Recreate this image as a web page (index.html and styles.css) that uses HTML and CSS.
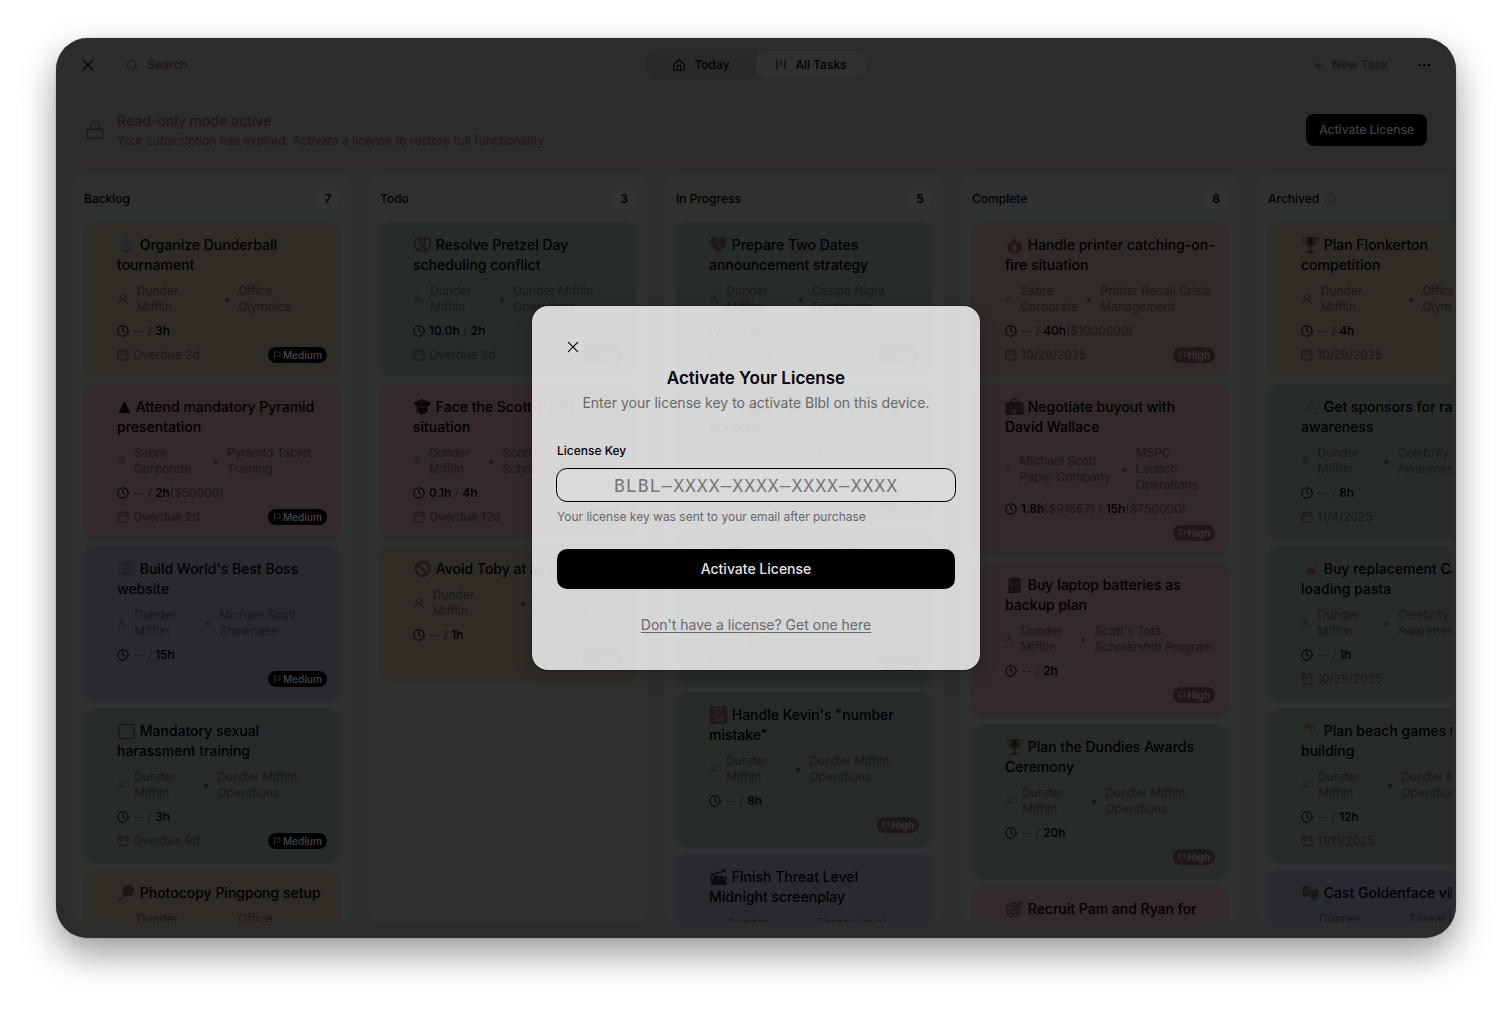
FILE: index.html
```html
<!DOCTYPE html>
<html lang="en">
<head>
  <meta charset="UTF-8" />
  <meta name="viewport" content="width=device-width, initial-scale=1.0" />
  <title>Blbl – All Tasks</title>
  <link rel="stylesheet" href="styles.css">
</head>
<body>
  <!-- Icon sprite -->
  <svg class="sprite" aria-hidden="true">
    <symbol id="i-x" viewBox="0 0 24 24"><path d="M4 4l16 16M20 4L4 20"/></symbol>
    <symbol id="i-search" viewBox="0 0 24 24"><circle cx="11" cy="11" r="9"/><path d="M18 18l4 4"/></symbol>
    <symbol id="i-home" viewBox="0 0 24 24"><path d="M3 10.5L12 3l9 7.500V19a2 2 0 0 1-2 2H5a2 2 0 0 1-2-2z"/><path d="M9 21v-7a2 2 0 0 1 2-2h2a2 2 0 0 1 2 2v7"/></symbol>
    <symbol id="i-board" viewBox="0 0 24 24"><path d="M4 4v16M12 4v7M20 4v16"/></symbol>
    <symbol id="i-plus" viewBox="0 0 24 24"><path d="M4 12h16M12 4v16"/></symbol>
    <symbol id="i-dots" viewBox="0 0 24 24"><circle cx="3" cy="12" r="1.500"/><circle cx="12" cy="12" r="1.500"/><circle cx="21" cy="12" r="1.500"/></symbol>
    <symbol id="i-lock" viewBox="0 0 24 24"><rect x="2.500" y="11" width="19" height="11" rx="2"/><path d="M7 11V7a5 5 0 0 1 10 0v4"/></symbol>
    <symbol id="i-info" viewBox="0 0 24 24"><circle cx="12" cy="12" r="10"/><path d="M12 11v6M12 7v1"/></symbol>
    <symbol id="i-user" viewBox="0 0 24 24"><circle cx="12" cy="8" r="5"/><path d="M4 22v-2a5 5 0 0 1 5-5h6a5 5 0 0 1 5 5v2"/></symbol>
    <symbol id="i-clock" viewBox="0 0 24 24"><circle cx="12" cy="12" r="10.500"/><path d="M12 6v6l4 3"/></symbol>
    <symbol id="i-date" viewBox="0 0 24 24"><rect x="2" y="4" width="20" height="18" rx="2"/><path d="M2 10h20M7 1v5M17 1v5"/></symbol>
    <symbol id="i-flag" viewBox="0 0 24 24"><path d="M4 23V3M4 3c6-3 9 3 17 0v12c-8 3-11-3-17 0"/></symbol>

    <!-- Task pictures -->
    <symbol id="e-ball" viewBox="0 0 18 18"><circle cx="9" cy="9" r="8" fill="#2a2d2e"/><path d="M3 6c4-3 8-3 12 0M9 2c-2 5 0 9 5 11M3 10c4 0 7 2 8 5" fill="none" stroke="#202224"/><path d="M2 12a8 8 0 0 0 14 0c-4 3-10 3-14 0z" fill="#201c1b"/></symbol>
    <symbol id="e-pyramid" viewBox="0 0 14 18"><path d="M7 3l6 12H1z" fill="#000"/></symbol>
    <symbol id="e-globe" viewBox="0 0 18 18"><g fill="none" stroke="#1f1f22"><circle cx="9" cy="9" r="7.500"/><ellipse cx="9" cy="9" rx="3.500" ry="7.500"/><path d="M9 1.500v15M1.500 9h15M3 5h12M3 13h12"/></g></symbol>
    <symbol id="e-frame" viewBox="0 0 18 18"><rect x="1.500" y="2.500" width="15" height="14" fill="#272b2a" stroke="#181413"/></symbol>
    <symbol id="e-paddle" viewBox="0 0 18 18"><path d="M5 10C4 4 8 1 12 1s6 4 4 8c-2 3-5 4-8 3l-6 5-1-1 5-4z" fill="#1e1718"/><circle cx="14" cy="14" r="2" fill="#302c2b"/></symbol>
    <symbol id="e-pretzel" viewBox="0 0 18 18"><path d="M4 15L11 8c2-3 0-6-2-4-2-2-4 1-2 4l7 7M9 4C6 0 1 2 1 7s3 8 8 8 8-3 8-8-5-7-8-3" fill="none" stroke="#231818" stroke-width="2"/></symbol>
    <symbol id="e-grad" viewBox="0 0 18 18"><path d="M8 1l10 4-4 4v5l-6 3-4-4V9L0 5z" fill="#090909"/><path d="M3 7v9M6 8l4 2 3-2" fill="none" stroke="#1c1819"/></symbol>
    <symbol id="e-no" viewBox="0 0 18 18"><g fill="none" stroke="#1f1a18" stroke-width="2.500"><circle cx="9" cy="9" r="7"/><path d="M4 4l10 10"/></g></symbol>
    <symbol id="e-heart" viewBox="0 0 18 18"><path d="M9 16C4 13 0 8 1 4c1-3 6-4 8 0 2-4 7-3 8 0 1 4-3 9-8 12z" fill="#211718"/><path d="M9 4l-2 3 4 2-3 3 1 3" fill="none" stroke="#2b2b2b"/></symbol>
    <symbol id="e-numbers" viewBox="0 0 18 18"><rect x="0" y="0" width="18" height="18" rx="3" fill="#211819"/><text x="4" y="8" class="digits">12</text><text x="4" y="16" class="digits">34</text></symbol>
    <symbol id="e-clapper" viewBox="0 0 18 18"><path d="M1 8h16v9H2zM1 6l15-5 1 2L2 8z" fill="#0b0b0b"/><path d="M4 5l3 1M9 3l3 1M4 8l-1 3M10 8l-1 3M15 8l-1 3" stroke="#2b2b2d"/></symbol>
    <symbol id="e-fire" viewBox="0 0 18 18"><path d="M8 1c5 4 2 6 4 7l2-3c4 6 2 12-5 12S0 10 4 6c1 3 2 3 2 1 0-3 3-3 2-6z" fill="#201917"/><path d="M9 16c-4-1-4-4 0-8 4 4 3 7 0 8z" fill="#302b23"/></symbol>
    <symbol id="e-case" viewBox="0 0 18 18"><path d="M5 5c0-5 8-5 8 0" fill="none" stroke="#171212" stroke-width="1.500"/><rect x="0" y="4" width="18" height="13" rx="1" fill="#171212"/><path d="M3 6l5 6M15 6l-5 6" stroke="#231b1b"/><rect x="8" y="12" width="2" height="3" fill="#30292a"/></symbol>
    <symbol id="e-battery" viewBox="0 0 18 18"><rect x="3" y="2" width="12" height="15" rx="1" fill="#141111"/><path d="M6 1h6M7 9h4M6 5v8M12 5v8" stroke="#211b1b" stroke-width="1.500"/></symbol>
    <symbol id="e-trophy" viewBox="0 0 18 18"><path d="M4 1h10v5c0 3-3 5-4 5v3l4 3H4l4-3v-3C7 11 4 9 4 6z" fill="#1e1713"/><path d="M4 2H1c0 4 1 6 5 7M14 2h3c0 4-1 6-5 7" fill="none" stroke="#1e1713"/><path d="M9 2v6" stroke="#080808" stroke-width="2"/></symbol>
    <symbol id="e-target" viewBox="0 0 18 18"><g fill="none" stroke="#1d1818" stroke-width="1.500"><circle cx="8" cy="10" r="7"/><circle cx="8" cy="10" r="4"/><circle cx="8" cy="10" r="1"/><path d="M8 10l8-8M14 1v3h3"/></g></symbol>
    <symbol id="e-run" viewBox="0 0 18 18"><circle cx="9" cy="2" r="1" fill="#2d211d"/><path d="M10 5L7 9l3 2M7 10l-5 4M10 6l3 2" fill="none" stroke="#1c1a19"/><circle cx="15" cy="15" r="1" fill="#111"/></symbol>
    <symbol id="e-pasta" viewBox="0 0 18 18"><ellipse cx="9" cy="12" rx="8" ry="3" fill="#252a29"/><path d="M4 12c1-5 9-5 10 0-2 2-8 2-10 0z" fill="#231817"/><path d="M12 3l4-1" stroke="#1d1918"/></symbol>
    <symbol id="e-beach" viewBox="0 0 18 18"><path d="M2 7c2-6 10-6 13 1-5-2-9-2-13-1z" fill="#2b1f1c"/><path d="M9 5l2 9" stroke="#1c1a19"/><path d="M1 13c5-2 11-1 16 1" fill="none" stroke="#302a25" stroke-width="2"/></symbol>
    <symbol id="e-masks" viewBox="0 0 18 18"><path d="M1 2l8 1v8l-5 2-3-3zM9 7l8-2v8l-4 4-4-3z" fill="#1b1718"/><path d="M3 5h2M6 6h2M11 10l2-1M15 8v2M3 9l3-1M12 13l3 1" stroke="#302b2a"/></symbol>
  </svg>

  <div class="window">
    <header class="topbar">
      <div class="topbar-side">
        <button class="icon-btn" aria-label="Close"><svg class="icon s14"><use href="#i-x"/></svg></button>
        <label class="search">
          <svg class="icon s12"><use href="#i-search"/></svg>
          <input type="text" placeholder="Search" aria-label="Search">
        </label>
      </div>
      <nav class="tabs">
        <button class="tab"><svg class="icon s14"><use href="#i-home"/></svg>Today</button>
        <button class="tab active"><svg class="icon s12"><use href="#i-board"/></svg>All Tasks</button>
      </nav>
      <div class="topbar-side right">
        <button class="new-task"><svg class="icon s12"><use href="#i-plus"/></svg>New Task</button>
        <button class="icon-btn" aria-label="More"><svg class="icon s12 solid"><use href="#i-dots"/></svg></button>
      </div>
    </header>

    <section class="banner">
      <svg class="icon s20"><use href="#i-lock"/></svg>
      <div class="banner-text">
        <strong>Read-only mode active</strong>
        <span>Your subscription has expired. Activate a license to restore full functionality.</span>
      </div>
      <button class="banner-btn">Activate License</button>
    </section>

    <main class="board">
      <section class="column">
        <header class="column-head"><h2>Backlog</h2><span class="count">7</span></header>
        <article class="card yellow">
          <h3><svg class="emoji"><use href="#e-ball"/></svg> Organize Dunderball tournament</h3>
          <div class="meta"><svg class="icon s12"><use href="#i-user"/></svg><span>Dunder Mifflin</span><i>•</i><span>Office Olympics</span></div>
          <div class="time"><svg class="icon s12"><use href="#i-clock"/></svg><span>-- / <b>3h</b></span></div>
          <div class="foot"><svg class="icon s12"><use href="#i-date"/></svg><span>Overdue 2d</span><span class="badge"><svg class="icon s8"><use href="#i-flag"/></svg>Medium</span></div>
        </article>
        <article class="card pink">
          <h3><svg class="emoji narrow"><use href="#e-pyramid"/></svg> Attend mandatory Pyramid presentation</h3>
          <div class="meta"><svg class="icon s12"><use href="#i-user"/></svg><span>Sabre Corporate</span><i>•</i><span>Pyramid Tablet Training</span></div>
          <div class="time"><svg class="icon s12"><use href="#i-clock"/></svg><span>-- / <b>2h</b>($50000)</span></div>
          <div class="foot"><svg class="icon s12"><use href="#i-date"/></svg><span>Overdue 2d</span><span class="badge"><svg class="icon s8"><use href="#i-flag"/></svg>Medium</span></div>
        </article>
        <article class="card purple">
          <h3><svg class="emoji"><use href="#e-globe"/></svg> Build World's Best Boss website</h3>
          <div class="meta"><svg class="icon s12"><use href="#i-user"/></svg><span>Dunder Mifflin</span><i>•</i><span>Michael Scott Showcase</span></div>
          <div class="time"><svg class="icon s12"><use href="#i-clock"/></svg><span>-- / <b>15h</b></span></div>
          <div class="foot"><span class="badge"><svg class="icon s8"><use href="#i-flag"/></svg>Medium</span></div>
        </article>
        <article class="card green">
          <h3><svg class="emoji"><use href="#e-frame"/></svg> Mandatory sexual harassment training</h3>
          <div class="meta"><svg class="icon s12"><use href="#i-user"/></svg><span>Dunder Mifflin</span><i>•</i><span>Dunder Mifflin Operations</span></div>
          <div class="time"><svg class="icon s12"><use href="#i-clock"/></svg><span>-- / <b>3h</b></span></div>
          <div class="foot"><svg class="icon s12"><use href="#i-date"/></svg><span>Overdue 9d</span><span class="badge"><svg class="icon s8"><use href="#i-flag"/></svg>Medium</span></div>
        </article>
        <article class="card yellow">
          <h3><svg class="emoji"><use href="#e-paddle"/></svg> Photocopy Pingpong setup</h3>
          <div class="meta"><svg class="icon s12"><use href="#i-user"/></svg><span>Dunder Mifflin</span><i>•</i><span>Office Olympics</span></div>
        </article>
      </section>

      <section class="column">
        <header class="column-head"><h2>Todo</h2><span class="count">3</span></header>
        <article class="card green">
          <h3><svg class="emoji"><use href="#e-pretzel"/></svg> Resolve Pretzel Day scheduling conflict</h3>
          <div class="meta"><svg class="icon s12"><use href="#i-user"/></svg><span>Dunder Mifflin</span><i>•</i><span>Dunder Mifflin Operations</span></div>
          <div class="time"><svg class="icon s12"><use href="#i-clock"/></svg><span><b>10.0h</b> / <b>2h</b></span></div>
          <div class="foot"><svg class="icon s12"><use href="#i-date"/></svg><span>Overdue 2d</span><span class="badge high"><svg class="icon s8"><use href="#i-flag"/></svg>High</span></div>
        </article>
        <article class="card pink">
          <h3><svg class="emoji"><use href="#e-grad"/></svg> Face the Scott's Tots situation</h3>
          <div class="meta"><svg class="icon s12"><use href="#i-user"/></svg><span>Dunder Mifflin</span><i>•</i><span>Scott's Tots Scholarship Program</span></div>
          <div class="time"><svg class="icon s12"><use href="#i-clock"/></svg><span><b>0.1h</b> / <b>4h</b></span></div>
          <div class="foot"><svg class="icon s12"><use href="#i-date"/></svg><span>Overdue 12d</span><span class="badge high"><svg class="icon s8"><use href="#i-flag"/></svg>High</span></div>
        </article>
        <article class="card yellow">
          <h3><svg class="emoji"><use href="#e-no"/></svg> Avoid Toby at all costs</h3>
          <div class="meta"><svg class="icon s12"><use href="#i-user"/></svg><span>Dunder Mifflin</span><i>•</i><span>Office Olympics</span></div>
          <div class="time"><svg class="icon s12"><use href="#i-clock"/></svg><span>-- / <b>1h</b></span></div>
          <div class="foot"><span class="badge high"><svg class="icon s8"><use href="#i-flag"/></svg>High</span></div>
        </article>
      </section>

      <section class="column">
        <header class="column-head"><h2>In Progress</h2><span class="count">5</span></header>
        <article class="card green">
          <h3><svg class="emoji"><use href="#e-heart"/></svg> Prepare Two Dates announcement strategy</h3>
          <div class="meta"><svg class="icon s12"><use href="#i-user"/></svg><span>Dunder Mifflin</span><i>•</i><span>Casino Night Fundraiser</span></div>
          <div class="time"><svg class="icon s12"><use href="#i-clock"/></svg><span>-- / <b>1h</b></span></div>
          <div class="foot"><svg class="icon s12"><use href="#i-date"/></svg><span>Overdue 2d</span><span class="badge high"><svg class="icon s8"><use href="#i-flag"/></svg>High</span></div>
        </article>
        <article class="card green">
          <h3><svg class="emoji"><use href="#e-globe"/></svg> Prepare diversity training content</h3>
          <div class="meta"><svg class="icon s12"><use href="#i-user"/></svg><span>Dunder Mifflin</span><i>•</i><span>Diversity Day</span></div>
          <div class="time"><svg class="icon s12"><use href="#i-clock"/></svg><span>-- / <b>6h</b></span></div>
          <div class="foot"><span class="badge high"><svg class="icon s8"><use href="#i-flag"/></svg>High</span></div>
        </article>
        <article class="card green">
          <h3><svg class="emoji"><use href="#e-no"/></svg> Set up Casino Night fundraiser tables</h3>
          <div class="meta"><svg class="icon s12"><use href="#i-user"/></svg><span>Dunder Mifflin</span><i>•</i><span>Casino Night Fundraiser</span></div>
          <div class="time"><svg class="icon s12"><use href="#i-clock"/></svg><span>-- / <b>12h</b></span></div>
          <div class="foot"><svg class="icon s12"><use href="#i-date"/></svg><span class="badge high"><svg class="icon s8"><use href="#i-flag"/></svg>High</span></div>
        </article>
        <article class="card green">
          <h3><svg class="emoji"><use href="#e-numbers"/></svg> Handle Kevin's "number mistake"</h3>
          <div class="meta"><svg class="icon s12"><use href="#i-user"/></svg><span>Dunder Mifflin</span><i>•</i><span>Dunder Mifflin Operations</span></div>
          <div class="time"><svg class="icon s12"><use href="#i-clock"/></svg><span>-- / <b>8h</b></span></div>
          <div class="foot"><span class="badge high"><svg class="icon s8"><use href="#i-flag"/></svg>High</span></div>
        </article>
        <article class="card purple">
          <h3><svg class="emoji"><use href="#e-clapper"/></svg> Finish Threat Level Midnight screenplay</h3>
          <div class="meta"><svg class="icon s12"><use href="#i-user"/></svg><span>Dunder Mifflin</span><i>•</i><span>Threat Level Midnight</span></div>
        </article>
      </section>

      <section class="column">
        <header class="column-head"><h2>Complete</h2><span class="count">8</span></header>
        <article class="card orange">
          <h3><svg class="emoji"><use href="#e-fire"/></svg> Handle printer catching-on-fire situation</h3>
          <div class="meta"><svg class="icon s12"><use href="#i-user"/></svg><span>Sabre Corporate</span><i>•</i><span>Printer Recall Crisis Management</span></div>
          <div class="time"><svg class="icon s12"><use href="#i-clock"/></svg><span>-- / <b>40h</b>($1000000)</span></div>
          <div class="foot"><svg class="icon s12"><use href="#i-date"/></svg><span>10/28/2025</span><span class="badge high"><svg class="icon s8"><use href="#i-flag"/></svg>High</span></div>
        </article>
        <article class="card pink">
          <h3><svg class="emoji"><use href="#e-case"/></svg> Negotiate buyout with David Wallace</h3>
          <div class="meta"><svg class="icon s12"><use href="#i-user"/></svg><span>Michael Scott Paper Company</span><i>•</i><span>MSPC Launch Operations</span></div>
          <div class="time"><svg class="icon s12"><use href="#i-clock"/></svg><span><b>1.8h</b>($91667) / <b>15h</b>($750000)</span></div>
          <div class="foot"><span class="badge high"><svg class="icon s8"><use href="#i-flag"/></svg>High</span></div>
        </article>
        <article class="card pink">
          <h3><svg class="emoji"><use href="#e-battery"/></svg> Buy laptop batteries as backup plan</h3>
          <div class="meta"><svg class="icon s12"><use href="#i-user"/></svg><span>Dunder Mifflin</span><i>•</i><span>Scott's Tots Scholarship Program</span></div>
          <div class="time"><svg class="icon s12"><use href="#i-clock"/></svg><span>-- / <b>2h</b></span></div>
          <div class="foot"><span class="badge high"><svg class="icon s8"><use href="#i-flag"/></svg>High</span></div>
        </article>
        <article class="card green">
          <h3><svg class="emoji"><use href="#e-trophy"/></svg> Plan the Dundies Awards Ceremony</h3>
          <div class="meta"><svg class="icon s12"><use href="#i-user"/></svg><span>Dunder Mifflin</span><i>•</i><span>Dunder Mifflin Operations</span></div>
          <div class="time"><svg class="icon s12"><use href="#i-clock"/></svg><span>-- / <b>20h</b></span></div>
          <div class="foot"><span class="badge high"><svg class="icon s8"><use href="#i-flag"/></svg>High</span></div>
        </article>
        <article class="card pink">
          <h3><svg class="emoji"><use href="#e-target"/></svg> Recruit Pam and Ryan for MSPC</h3>
        </article>
      </section>

      <section class="column">
        <header class="column-head"><h2>Archived</h2><svg class="icon s12 info"><use href="#i-info"/></svg></header>
        <article class="card yellow">
          <h3><svg class="emoji"><use href="#e-trophy"/></svg> Plan Flonkerton<br>competition</h3>
          <div class="meta"><svg class="icon s12"><use href="#i-user"/></svg><span>Dunder Mifflin</span><i>•</i><span>Office Olympics</span></div>
          <div class="time"><svg class="icon s12"><use href="#i-clock"/></svg><span>-- / <b>4h</b></span></div>
          <div class="foot"><svg class="icon s12"><use href="#i-date"/></svg><span>10/29/2025</span></div>
        </article>
        <article class="card green">
          <h3><svg class="emoji"><use href="#e-run"/></svg> Get sponsors for rabies awareness</h3>
          <div class="meta"><svg class="icon s12"><use href="#i-user"/></svg><span>Dunder Mifflin</span><i>•</i><span>Celebrity Rabies Awareness</span></div>
          <div class="time"><svg class="icon s12"><use href="#i-clock"/></svg><span>-- / <b>8h</b></span></div>
          <div class="foot"><svg class="icon s12"><use href="#i-date"/></svg><span>11/4/2025</span></div>
        </article>
        <article class="card green">
          <h3><svg class="emoji"><use href="#e-pasta"/></svg> Buy replacement Carbo-loading pasta</h3>
          <div class="meta"><svg class="icon s12"><use href="#i-user"/></svg><span>Dunder Mifflin</span><i>•</i><span>Celebrity Rabies Awareness</span></div>
          <div class="time"><svg class="icon s12"><use href="#i-clock"/></svg><span>-- / <b>1h</b></span></div>
          <div class="foot"><svg class="icon s12"><use href="#i-date"/></svg><span>10/29/2025</span></div>
        </article>
        <article class="card green">
          <h3><svg class="emoji"><use href="#e-beach"/></svg> Plan beach games team building</h3>
          <div class="meta"><svg class="icon s12"><use href="#i-user"/></svg><span>Dunder Mifflin</span><i>•</i><span>Dunder Mifflin Operations</span></div>
          <div class="time"><svg class="icon s12"><use href="#i-clock"/></svg><span>-- / <b>12h</b></span></div>
          <div class="foot"><svg class="icon s12"><use href="#i-date"/></svg><span>11/11/2025</span></div>
        </article>
        <article class="card purple">
          <h3><svg class="emoji"><use href="#e-masks"/></svg> Cast Goldenface villain</h3>
          <div class="meta"><svg class="icon s12"><use href="#i-user"/></svg><span>Dunder Mifflin</span><i>•</i><span>Threat Level Midnight</span></div>
        </article>
      </section>
    </main>

    <!-- License dialog -->
    <div class="overlay">
      <form class="dialog" role="dialog" aria-labelledby="dialogTitle">
        <button type="button" class="icon-btn" aria-label="Close dialog"><svg class="icon s14"><use href="#i-x"/></svg></button>
        <h1 id="dialogTitle">Activate Your License</h1>
        <p class="desc">Enter your license key to activate Blbl on this device.</p>
        <label for="licenseKey">License Key</label>
        <input id="licenseKey" type="text" placeholder="BLBL–XXXX–XXXX–XXXX–XXXX">
        <p class="hint">Your license key was sent to your email after purchase</p>
        <button type="button" class="submit">Activate License</button>
        <a href="#buy">Don't have a license? Get one here</a>
      </form>
    </div>
  </div>
</body>
</html>
```
FILE: styles.css
```css
:root {
  --bg: #2c2c2c;
  --column: #2e3130;
  --muted: #1c1718;
  --ink: #000;
}
*, *::before, *::after { box-sizing: border-box; }
body {
  margin: 0;
  height: 100vh;
  padding: 38px 56px 74px;
  background: #fff;
  color: var(--ink);
  font-family: Inter, "Liberation Sans", sans-serif;
  font-size: 12px;
  line-height: 16px;
}
h1, h2, h3, p { margin: 0; }
button, input { font: inherit; color: inherit; }
button {
  display: flex;
  align-items: center;
  justify-content: center;
  padding: 0;
  border: none;
  background: none;
  cursor: pointer;
}

/* ── Icons ── */
.sprite { position: absolute; width: 0; height: 0; }
.icon {
  flex: none;
  fill: none;
  stroke: currentColor;
  stroke-width: 2;
  stroke-linecap: round;
  stroke-linejoin: round;
}
.solid { fill: currentColor; }
.s8 { width: 8px; height: 8px; }
.s12 { width: 12px; height: 12px; }
.s14 { width: 14px; height: 14px; }
.s20 { width: 20px; height: 20px; }
.digits { font-size: 8px; font-weight: 600; fill: #302c2c; }
.emoji {
  width: 19px;
  height: 18px;
  vertical-align: -4px;
}
.emoji.narrow { width: 15px; }

/* ── Window ── */
.window {
  position: relative;
  display: flex;
  flex-direction: column;
  height: 100%;
  overflow: hidden;
  border-radius: 32px;
  background: var(--bg);
  box-shadow: 0 0 1px rgba(0,0,0,.6), 0 16px 36px rgba(0,0,0,.4);
}

.topbar {
  display: flex;
  align-items: center;
  height: 54px;
  padding: 0 16px;
  font-weight: 500;
}
.topbar-side {
  display: flex;
  flex: 1;
  align-items: center;
  gap: 8px;
}
.right { justify-content: flex-end; }
.icon-btn { width: 32px; height: 32px; }
.search {
  display: flex;
  align-items: center;
  gap: 9px;
  width: 206px;
  height: 28px;
  padding: 0 14px;
  border-radius: 8px;
  background: #2d2d2d;
  color: var(--muted);
}
.search input {
  width: 100%;
  padding: 0;
  border: none;
  outline: none;
  background: none;
}
.search input::placeholder { color: var(--muted); }
.tabs {
  display: grid;
  grid-template-columns: 1fr 1fr;
  width: 222px;
  padding: 1px;
  border-radius: 12px;
  background: #282a2a;
}
.tab {
  gap: 8px;
  height: 28px;
  border-radius: 10px;
}
.tab.active { background: #2e3130; }
.new-task {
  gap: 8px;
  padding: 0 12px;
  color: var(--muted);
}

.banner {
  display: flex;
  align-items: center;
  gap: 12px;
  margin: 5px 12px 11px;
  padding: 11px 16px;
  border: 1px solid #302a2b;
  border-radius: 12px;
  background: #2e2b2c;
  color: #1f1718;
}
.banner .icon { stroke-width: 1.5; }
.banner-text {
  display: flex;
  flex: 1;
  flex-direction: column;
  padding-top: 2px;
}
.banner strong {
  font-size: 14px;
  font-weight: 500;
  line-height: 20px;
}
.banner-text span { line-height: 20px; }
.banner-btn {
  height: 32px;
  padding: 0 13px;
  border-radius: 8px;
  background: #000;
  color: #404040;
  font-weight: 500;
}

/* ── Board ── */
.board {
  display: flex;
  flex: 1;
  gap: 16px;
  min-height: 0;
  margin: 0 4px 16px;
  padding-left: 12px;
  overflow: hidden;
}
.column {
  display: flex;
  flex: none;
  flex-direction: column;
  gap: 8px;
  width: 280px;
  padding: 12px;
  overflow: hidden;
  border-radius: 12px;
  background: var(--column);
}
.column-head {
  display: flex;
  flex: none;
  align-items: center;
  height: 26px;
  margin-bottom: 2px;
}
.column-head h2 { font-size: 12px; font-weight: 500; }
.count {
  width: 24px;
  margin-left: auto;
  border-radius: 12px;
  background: #303332;
  font-weight: 600;
  line-height: 24px;
  text-align: center;
}
.info { margin-left: 5px; color: #202020; }

.card {
  display: flex;
  flex: none;
  flex-direction: column;
  gap: 8px;
  padding: 13px 13px 13px 33px;
  border-radius: 12px;
  box-shadow: 0 1px 2px rgba(0,0,0,.12);
  color: var(--muted);
}
.yellow { background: #2f2c26; }
.pink { background: #31292a; }
.purple { background: #292a30; }
.green { background: #272c2b; }
.orange { background: #302b28; }
.card h3 {
  color: var(--ink);
  font-size: 14px;
  font-weight: 500;
  line-height: 20px;
}
.card b { color: var(--ink); font-weight: 500; }
.meta {
  display: flex;
  align-items: center;
  gap: 8px;
}
.meta .icon { flex: 0 1 auto; min-width: 0; }
.meta i { font-style: normal; }
.time, .foot {
  display: flex;
  align-items: center;
  gap: 4px;
  height: 16px;
}
.time .icon { color: var(--ink); }
.badge {
  display: flex;
  align-items: center;
  gap: 2px;
  height: 16px;
  margin-left: auto;
  padding: 0 5px;
  border-radius: 8px;
  background: #000;
  color: #404040;
  font-size: 10px;
  font-weight: 600;
}
.badge.high { background: #1f1718; color: #3a3536; }

/* ── License dialog ── */
.overlay {
  position: absolute;
  inset: 0;
  display: grid;
  place-items: center;
}
.dialog {
  display: flex;
  flex-direction: column;
  width: 448px;
  padding: 25px;
  border-radius: 16px;
  background: rgba(238,238,238,.88);
  box-shadow: 0 0 0 1px rgba(0,0,0,.2), 0 8px 20px rgba(0,0,0,.15);
}
.dialog h1 {
  font-size: 17px;
  font-weight: 600;
  line-height: 30px;
  text-align: center;
}
.desc {
  color: #686868;
  font-size: 14px;
  line-height: 20px;
  text-align: center;
}
.dialog label { margin-top: 30px; font-weight: 500; }
.dialog input {
  height: 32px;
  margin-top: 10px;
  padding: 0 12px;
  border: none;
  border-radius: 10px;
  outline: 1px solid #000;
  background: #dadada;
  font-family: "DejaVu Sans Mono", monospace;
  font-size: 18px;
  letter-spacing: 1px;
  text-align: center;
}
.dialog input::placeholder { color: #777; opacity: 1; }
.hint { margin-top: 8px; color: #686868; }
.submit {
  height: 40px;
  margin-top: 24px;
  border-radius: 10px;
  background: #000;
  color: #e4e4e4;
  font-size: 14px;
  font-weight: 500;
}
.dialog a {
  align-self: center;
  margin-top: 16px;
  color: #686868;
  font-size: 14px;
  line-height: 40px;
  text-underline-offset: 2px;
}
```
